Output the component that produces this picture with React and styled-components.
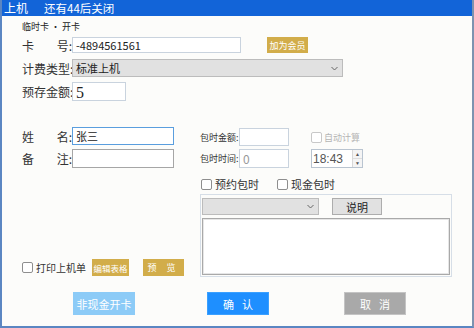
import React from "react";
import styled, { createGlobalStyle } from "styled-components";

const GlobalStyle = createGlobalStyle`
  html, body {
    margin: 0;
    padding: 0;
    background: #fcfcfa;
  }
  * {
    box-sizing: border-box;
  }
`;

const cjk = `"Noto Sans CJK SC", "Noto Sans", sans-serif`;

const Window = styled.div`
  width: 474px;
  height: 328px;
  display: flex;
  flex-direction: column;
  background: #fcfcfa;
  border-left: 2px solid #5b86c2;
  border-right: 2px solid #7d93b0;
  border-bottom: 2px solid #5b86c2;
  font-family: ${cjk};
  color: #333;
  overflow: hidden;
`;

const TitleBar = styled.div`
  height: 16px;
  margin: 0 -2px 0 -2px;
  background: #1264d8;
  color: #fff;
  display: flex;
  align-items: center;
  font-size: 12px;
  line-height: 16px;
  padding-left: 4px;
  span + span {
    margin-left: 16px;
    font-size: 11.5px;
  }
`;

const Body = styled.div`
  flex: 1;
  padding: 6px 0 0 20px;
  display: flex;
  flex-direction: column;
`;

const SubTitle = styled.div`
  font-size: 9px;
  line-height: 10px;
  height: 10px;
  color: #222;
`;

const Row = styled.div`
  display: flex;
  align-items: center;
  height: ${p => p.$h || 18}px;
  margin-top: ${p => p.$mt || 0}px;
`;

const Label = styled.div`
  width: ${p => p.$w || 50}px;
  flex: none;
  display: flex;
  justify-content: space-between;
  font-size: ${p => p.$size || 12}px;
  color: #333;
  white-space: nowrap;
`;

const TextBox = styled.div`
  width: ${p => p.$w}px;
  height: ${p => p.$h || 18}px;
  flex: none;
  background: #fff;
  border: 1px solid ${p => (p.$focus ? "#5a9ede" : p.$dark ? "#a6a6a6" : "#c9d3de")};
  display: flex;
  align-items: center;
  padding-left: 3px;
  font-size: 11px;
  color: ${p => (p.$muted ? "#999" : "#222")};
  font-family: ${p => (p.$serif ? `"Liberation Serif", serif` : cjk)};
  ${p => p.$serif && "font-size: 16px; padding-top: 3px;"}
`;

const SelectBox = styled.div`
  width: ${p => p.$w}px;
  height: ${p => p.$h || 18}px;
  flex: none;
  background: #e1e1e1;
  border: 1px solid #bcbcbc;
  display: flex;
  align-items: center;
  justify-content: space-between;
  padding: 0 4px 0 3px;
  font-size: 11px;
  color: #222;
`;

const Chevron = () => (
  <svg width="7" height="5" viewBox="0 0 7 5">
    <path d="M0.5 1 L3.5 4 L6.5 1" fill="none" stroke="#666" strokeWidth="1" />
  </svg>
);

const GoldButton = styled.div`
  width: ${p => p.$w}px;
  height: ${p => p.$h || 17}px;
  flex: none;
  margin-left: ${p => p.$ml || 0}px;
  background: #d2ad4a;
  color: #fff;
  font-size: ${p => p.$size || 9}px;
  display: flex;
  align-items: center;
  justify-content: center;
  letter-spacing: ${p => p.$ls || 0}px;
`;

const Middle = styled.div`
  margin-top: 26px;
  display: grid;
  grid-template-columns: 178px 252px;
  height: 149px;
`;

const LeftCol = styled.div`
  display: flex;
  flex-direction: column;
`;

const RightCol = styled.div`
  display: flex;
  flex-direction: column;
  padding-top: 1px;
`;

const Check = styled.span`
  width: 11px;
  height: 11px;
  flex: none;
  border: 1px solid ${p => (p.$disabled ? "#c8c8c8" : "#8e8e8e")};
  border-radius: 2px;
  background: #fff;
  margin-right: ${p => p.$mr || 3}px;
`;

const CheckLabel = styled.label`
  display: flex;
  align-items: center;
  font-size: ${p => p.$size || 11}px;
  color: ${p => (p.$disabled ? "#b4b4b4" : "#333")};
  margin-left: ${p => p.$ml || 0}px;
  width: ${p => (p.$w ? `${p.$w}px` : "auto")};
  white-space: nowrap;
`;

const TimeBox = styled.div`
  width: 52px;
  height: 19px;
  margin-left: 22px;
  border: 1px solid #b9c4d0;
  background: #fff;
  display: flex;
  align-items: stretch;
  font-family: "Liberation Sans", sans-serif;
  font-size: 12px;
  color: #555;
`;

const TimeText = styled.div`
  flex: 1;
  display: flex;
  align-items: center;
  padding-left: 1px;
`;

const Spinner = styled.div`
  width: 10px;
  display: flex;
  flex-direction: column;
  border-left: 1px solid #d8d8d8;
  background: #f4f4f4;
  div {
    flex: 1;
    display: flex;
    align-items: center;
    justify-content: center;
    font-size: 5px;
    color: #555;
  }
  div + div {
    border-top: 1px solid #ddd;
  }
`;

const GroupBox = styled.div`
  margin-top: 4px;
  width: 252px;
  height: 83px;
  border: 1px solid #d6dee7;
  padding: 3px 1px 0 1px;
  display: flex;
  flex-direction: column;
`;

const PlainButton = styled.div`
  width: 50px;
  height: 17px;
  margin-left: 13px;
  background: #e1e1e1;
  border: 1px solid #adadad;
  display: flex;
  align-items: center;
  justify-content: center;
  font-size: 11px;
  color: #222;
`;

const TextArea = styled.div`
  margin-top: 3px;
  width: 248px;
  height: 57px;
  background: #fff;
  border: 1px solid #a9a9a9;
  box-shadow: inset 0 0 0 1px #e6e6e6;
`;

const Footer = styled.div`
  margin-top: 16px;
  padding-left: 51px;
  display: flex;
`;

const ActionButton = styled.div`
  width: 62px;
  height: 23px;
  margin-left: ${p => p.$ml || 0}px;
  background: ${p => p.$bg};
  border: 1px solid ${p => p.$border || p.$bg};
  color: #fff;
  font-size: 11px;
  display: flex;
  align-items: center;
  justify-content: center;
  gap: ${p => p.$gap || 0}px;
`;

export default function App() {
  return (
    <>
      <GlobalStyle />
      <Window>
        <TitleBar>
          <span>上机</span>
          <span>还有44后关闭</span>
        </TitleBar>
        <Body>
          <SubTitle>临时卡 · 开卡</SubTitle>
          <Row $mt={5} $h={16}>
            <Label>
              <span>卡</span>
              <span>号:</span>
            </Label>
            <TextBox $w={169} $h={16}>-4894561561</TextBox>
            <GoldButton $w={41} $h={16} $ml={26}>加为会员</GoldButton>
          </Row>
          <Row $mt={6} $h={18}>
            <Label>计费类型:</Label>
            <SelectBox $w={271}>
              <span>标准上机</span>
              <Chevron />
            </SelectBox>
          </Row>
          <Row $mt={5} $h={19}>
            <Label>预存金额:</Label>
            <TextBox $w={54} $h={19} $serif>5</TextBox>
          </Row>

          <Middle>
            <LeftCol>
              <Row $h={18}>
                <Label>
                  <span>姓</span>
                  <span>名:</span>
                </Label>
                <TextBox $w={102} $focus>张三</TextBox>
              </Row>
              <Row $mt={4} $h={19}>
                <Label>
                  <span>备</span>
                  <span>注:</span>
                </Label>
                <TextBox $w={102} $h={19} $dark />
              </Row>
              <Row $mt={91} $h={17}>
                <CheckLabel $w={70} $size={10}>
                  <Check $mr={3} />
                  打印上机单
                </CheckLabel>
                <GoldButton $w={37} $size={8.5}>编辑表格</GoldButton>
                <GoldButton $w={41} $ml={14} $ls={4}>预 览</GoldButton>
              </Row>
            </LeftCol>

            <RightCol>
              <Row $h={18}>
                <Label $w={39} $size={9}>包时金额:</Label>
                <TextBox $w={50} />
                <CheckLabel $ml={22} $size={9} $disabled>
                  <Check $disabled $mr={2} />
                  自动计算
                </CheckLabel>
              </Row>
              <Row $mt={3} $h={19}>
                <Label $w={39} $size={9}>包时时间:</Label>
                <TextBox $w={50} $h={19} $muted style={{ fontSize: 12 }}>0</TextBox>
                <TimeBox>
                  <TimeText>18:43</TimeText>
                  <Spinner>
                    <div>▲</div>
                    <div>▼</div>
                  </Spinner>
                </TimeBox>
              </Row>
              <Row $mt={10} $h={12}>
                <CheckLabel $w={76} $ml={1}>
                  <Check />
                  预约包时
                </CheckLabel>
                <CheckLabel>
                  <Check />
                  现金包时
                </CheckLabel>
              </Row>
              <GroupBox>
                <Row $h={17}>
                  <SelectBox $w={117} $h={17}>
                    <span />
                    <Chevron />
                  </SelectBox>
                  <PlainButton>说明</PlainButton>
                </Row>
                <TextArea />
              </GroupBox>
            </RightCol>
          </Middle>

          <Footer>
            <ActionButton $bg="#8ccbf7">非现金开卡</ActionButton>
            <ActionButton $bg="#1e8fff" $border="#3aa0ff" $ml={72} $gap={8}>
              <span>确</span>
              <span>认</span>
            </ActionButton>
            <ActionButton $bg="#a9a9a9" $border="#c4c4c4" $ml={75} $gap={8}>
              <span>取</span>
              <span>消</span>
            </ActionButton>
          </Footer>
        </Body>
      </Window>
    </>
  );
}
